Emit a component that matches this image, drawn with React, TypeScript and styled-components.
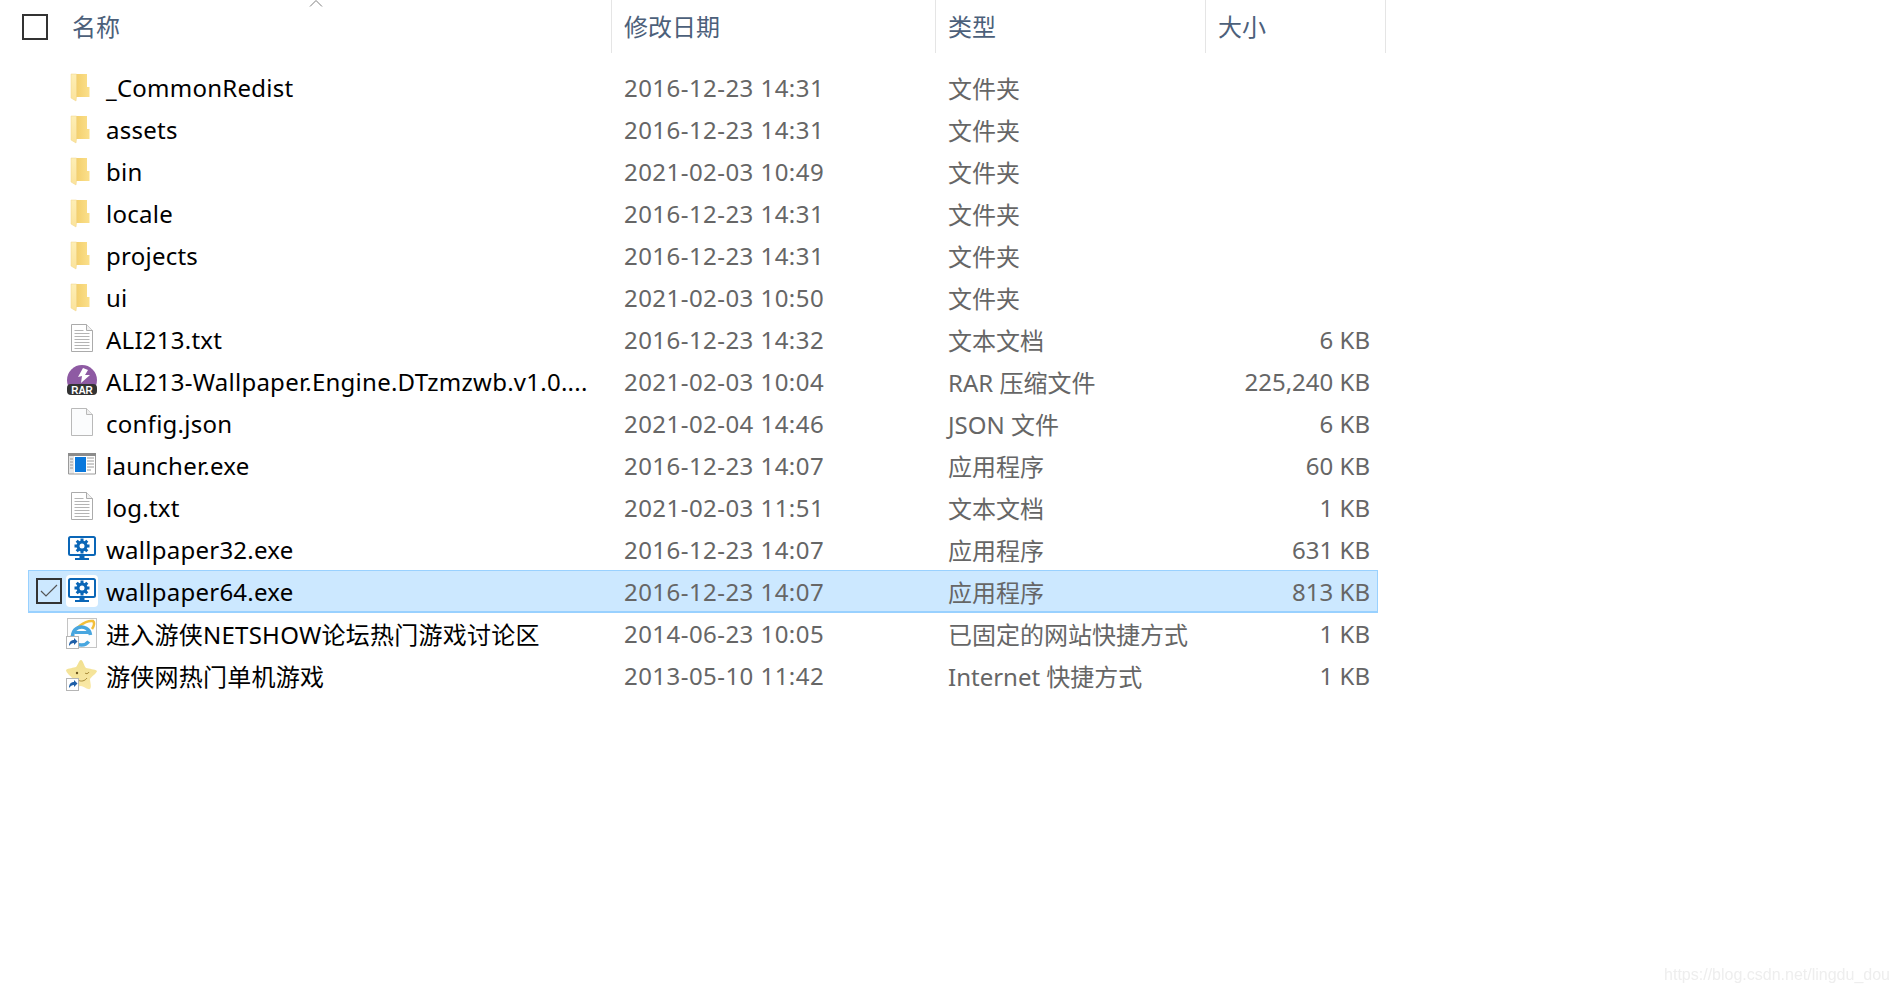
import React from "react";
import styled, { createGlobalStyle } from "styled-components";

const FONT = `"Noto Sans", "Noto Sans CJK SC", sans-serif`;

type IconKind = "folder" | "text" | "rar" | "blank" | "launcher" | "wallpaper" | "ie" | "star";

interface FileEntry {
  name: string;
  modified: string;
  type: string;
  size?: string;
  icon: IconKind;
  selected?: boolean;
}

const files: FileEntry[] = [
  { name: "_CommonRedist", modified: "2016-12-23 14:31", type: "文件夹", icon: "folder" },
  { name: "assets", modified: "2016-12-23 14:31", type: "文件夹", icon: "folder" },
  { name: "bin", modified: "2021-02-03 10:49", type: "文件夹", icon: "folder" },
  { name: "locale", modified: "2016-12-23 14:31", type: "文件夹", icon: "folder" },
  { name: "projects", modified: "2016-12-23 14:31", type: "文件夹", icon: "folder" },
  { name: "ui", modified: "2021-02-03 10:50", type: "文件夹", icon: "folder" },
  { name: "ALI213.txt", modified: "2016-12-23 14:32", type: "文本文档", size: "6 KB", icon: "text" },
  { name: "ALI213-Wallpaper.Engine.DTzmzwb.v1.0....", modified: "2021-02-03 10:04", type: "RAR 压缩文件", size: "225,240 KB", icon: "rar" },
  { name: "config.json", modified: "2021-02-04 14:46", type: "JSON 文件", size: "6 KB", icon: "blank" },
  { name: "launcher.exe", modified: "2016-12-23 14:07", type: "应用程序", size: "60 KB", icon: "launcher" },
  { name: "log.txt", modified: "2021-02-03 11:51", type: "文本文档", size: "1 KB", icon: "text" },
  { name: "wallpaper32.exe", modified: "2016-12-23 14:07", type: "应用程序", size: "631 KB", icon: "wallpaper" },
  { name: "wallpaper64.exe", modified: "2016-12-23 14:07", type: "应用程序", size: "813 KB", icon: "wallpaper", selected: true },
  { name: "进入游侠NETSHOW论坛热门游戏讨论区", modified: "2014-06-23 10:05", type: "已固定的网站快捷方式", size: "1 KB", icon: "ie" },
  { name: "游侠网热门单机游戏", modified: "2013-05-10 11:42", type: "Internet 快捷方式", size: "1 KB", icon: "star" },
];

const ShortcutBadge = () => (
  <g>
    <rect x="0.5" y="19.5" width="12" height="12" fill="#fff" stroke="#b5b5b5" />
    <path d="M3 29c0-4 2-6 5-6v-2l3.500 3.500L8 28v-2c-2 0-3.500 1-5 3z" fill="#1f5fa8" />
  </g>
);

const FileIcon: React.FC<{ kind: IconKind }> = ({ kind }) => {
  switch (kind) {
    case "folder":
      return (
        <svg width="32" height="32" viewBox="0 0 32 32">
          <defs>
            <linearGradient id="folderBack" x1="0" x2="1" y1="0" y2="0">
              <stop offset="0" stopColor="#f3cf6c" />
              <stop offset="1" stopColor="#fbe08c" />
            </linearGradient>
            <linearGradient id="folderFront" x1="0" x2="0" y1="0" y2="1">
              <stop offset="0" stopColor="#fdeeb5" />
              <stop offset="1" stopColor="#fbe39b" />
            </linearGradient>
          </defs>
          <path d="M10 3h11v13h2.500v10H10z" fill="url(#folderBack)" />
          <path d="M5 3l5.500 0V26l-0.500 4L5 27z" fill="url(#folderFront)" stroke="#f0d58a" strokeWidth="0.5" />
        </svg>
      );
    case "text":
      return (
        <svg width="32" height="32" viewBox="0 0 32 32">
          <path d="M5.500 1.500h15l6 6v21h-21z" fill="#fff" stroke="#ababab" />
          <path d="M20.500 1.500v6h6" fill="#f0f0f0" stroke="#ababab" />
          <path d="M8.500 7.500h9M8.500 10.500h15M8.500 13.500h15M8.500 16.500h15M8.500 19.500h15M8.500 22.500h15M8.500 25.500h15" stroke="#b4b4b4" />
        </svg>
      );
    case "blank":
      return (
        <svg width="32" height="32" viewBox="0 0 32 32">
          <path d="M5.500 1.500h15l6 6v21h-21z" fill="#fbfcfd" stroke="#b9b9b9" />
          <path d="M20.500 1.500v6h6" fill="#efefef" stroke="#b9b9b9" />
        </svg>
      );
    case "rar":
      return (
        <svg width="32" height="32" viewBox="0 0 32 32">
          <circle cx="16" cy="15" r="15" fill="#8e5aa3" />
          <path d="M17 3l-5 9 4-1-1 7 9-8-5 0 3-5z" fill="#fff" />
          <rect x="1" y="19" width="30" height="11" rx="4" fill="#333" />
          <RarLabel x="16" y="28.500" textAnchor="middle">RAR</RarLabel>
        </svg>
      );
    case "launcher":
      return (
        <svg width="32" height="32" viewBox="0 0 32 32">
          <rect x="2" y="4" width="28" height="21" fill="#fff" />
          <rect x="2" y="6" width="6" height="19" fill="#e6e6e6" />
          <path d="M2.500 25V4.500h27V25z" fill="none" stroke="#9a9a9a" />
          <rect x="2" y="4" width="28" height="3" fill="#8c8c8c" />
          <rect x="9" y="8" width="11" height="15" fill="#0a78dc" />
          <path d="M4 10h3M4 13h3M4 16h3M4 19h3" stroke="#9a9a9a" />
          <path d="M21 9h7M21 12h7M21 15h7M21 18h7M21 21h4" stroke="#9a9a9a" />
        </svg>
      );
    case "wallpaper":
      return (
        <svg width="32" height="32" viewBox="0 0 32 32">
          <rect x="3" y="4" width="26" height="18" rx="1.500" fill="#fff" stroke="#0a66b7" strokeWidth="2" />
          <path d="M13.500 23h5v2h-5zM9 25h14v2H9z" fill="#0a66b7" />
          <path d="M16 5.500v15M8.500 13h15M10.700 7.700l10.600 10.600M10.700 18.300L21.300 7.700" stroke="#0a66b7" strokeWidth="3" />
          <circle cx="16" cy="13" r="5.500" fill="#0a66b7" />
          <circle cx="16" cy="13" r="2.500" fill="#fff" />
        </svg>
      );
    case "ie":
      return (
        <svg width="32" height="32" viewBox="0 0 32 32">
          <rect x="1.500" y="1.500" width="29" height="29" fill="#fdfdfd" stroke="#c4c4c4" />
          <path d="M5 21C8 11 19 3 27 4c2 2 1 5-1 8" fill="none" stroke="#f4bf3a" strokeWidth="2.500" />
          <path d="M24.500 18a9 9 0 1 0-1.800 6.500" fill="none" stroke="#48a6df" strokeWidth="3.500" />
          <path d="M9 15.500h16" stroke="#48a6df" strokeWidth="3" />
          <ShortcutBadge />
        </svg>
      );
    case "star":
      return (
        <svg width="32" height="32" viewBox="0 0 32 32">
          <defs>
            <linearGradient id="starFill" x1="0" x2="0" y1="0" y2="1">
              <stop offset="0" stopColor="#f1e08f" />
              <stop offset="1" stopColor="#fae9a8" />
            </linearGradient>
          </defs>
          <path d="M15 1c2 0 3 6 5 8 3 1 9 1 11 3 0 2-6 6-7 8 0 3 2 8 0 10-2 1-7-3-9-3-3 0-7 3-9 2-2-2 0-7 0-10-1-2-6-5-6-8 2-2 8-2 10-3 2-2 3-7 5-7z" fill="url(#starFill)" />
          <circle cx="11" cy="14" r="1.200" fill="#6b5420" />
          <path d="M19 14c1 1 3 1 4-1M12 21c3 2 7 1 9-2" stroke="#a98c3a" fill="none" />
          <ShortcutBadge />
        </svg>
      );
  }
};

const App: React.FC = () => (
  <Page>
    <GlobalStyle />
    <Header>
      <SortArrow width="20" height="8" viewBox="0 0 20 8">
        <path d="M4 6.500L10 0.500l6 6" fill="none" stroke="#7f7f7f" />
      </SortArrow>
      <HeaderCheck />
      <HeaderCell $width={540}>名称</HeaderCell>
      <HeaderCell $width={324}>修改日期</HeaderCell>
      <HeaderCell $width={270}>类型</HeaderCell>
      <HeaderCell $width={180}>大小</HeaderCell>
    </Header>
    <List>
      {files.map((file) => (
        <Row key={file.name} $selected={file.selected}>
          <CheckSlot>
            {file.selected && (
              <RowCheck>
                <svg width="18" height="14" viewBox="0 0 18 14">
                  <path d="M1 7l5 5L17 1" fill="none" stroke="#555" strokeWidth="1.200" />
                </svg>
              </RowCheck>
            )}
          </CheckSlot>
          <IconSlot $selected={file.selected}>
            <FileIcon kind={file.icon} />
          </IconSlot>
          <Name>{file.name}</Name>
          <Modified>{file.modified}</Modified>
          <Meta>{file.type}</Meta>
          <Size>{file.size}</Size>
        </Row>
      ))}
    </List>
    <Watermark>https://blog.csdn.net/lingdu_dou</Watermark>
  </Page>
);

export default App;

const GlobalStyle = createGlobalStyle`
  html, body {
    margin: 0;
    background: #fff;
  }
`;

const Page = styled.div`
  position: relative;
  width: 1900px;
  height: 993px;
  overflow: hidden;
  background: #fff;
  font-family: ${FONT};
`;

const Header = styled.div`
  position: relative;
  display: flex;
  height: 53px;
  padding-left: 22px;
`;

const SortArrow = styled.svg`
  position: absolute;
  left: 306px;
  top: 0;
`;

const HeaderCheck = styled.div`
  box-sizing: border-box;
  width: 26px;
  height: 26px;
  margin: 14px 24px 0 0;
  border: 2px solid #333;
`;

const HeaderCell = styled.div<{ $width: number }>`
  box-sizing: border-box;
  width: ${(p) => p.$width}px;
  padding-left: 12px;
  border-right: 1px solid #e5e5e5;
  font-size: 24px;
  line-height: 53px;
  color: #4c607a;

  &:nth-child(3) {
    padding-left: 0;
  }
`;

const List = styled.div`
  display: flex;
  flex-direction: column;
  width: 1350px;
  margin: 13px 0 0 28px;
`;

const Row = styled.div<{ $selected?: boolean }>`
  box-sizing: border-box;
  display: grid;
  grid-template-columns: 36px 32px 526px 324px 270px 152px;
  align-items: center;
  height: 42px;
  padding-left: 1px;
  border: 1px solid ${(p) => (p.$selected ? "#99d1ff" : "transparent")};
  background: ${(p) => (p.$selected ? "#cce8ff" : "transparent")};
  box-shadow: ${(p) => (p.$selected ? "0 1px 0 #99d1ff" : "none")};
  font-size: 24px;
`;

const CheckSlot = styled.div`
  display: flex;
  align-items: center;
  padding-left: 6px;
`;

const RowCheck = styled.div`
  box-sizing: border-box;
  display: flex;
  align-items: center;
  justify-content: center;
  width: 26px;
  height: 26px;
  border: 2px solid #333;
`;

const IconSlot = styled.div<{ $selected?: boolean }>`
  display: flex;
  width: 32px;
  height: 32px;
  border-radius: 4px;
  background: ${(p) => (p.$selected ? "#fff" : "transparent")};
`;

const Name = styled.div`
  padding-left: 8px;
  color: #000;
  letter-spacing: 0.25px;
  white-space: nowrap;
`;

const Meta = styled.div`
  color: #666;
  white-space: nowrap;
`;

const Modified = styled(Meta)`
  letter-spacing: 0.45px;
`;

const Size = styled(Meta)`
  text-align: right;
`;

const RarLabel = styled.text`
  font-family: "Liberation Sans", sans-serif;
  font-size: 10px;
  font-weight: 700;
  fill: #fff;
`;

const Watermark = styled.div`
  position: absolute;
  right: 10px;
  top: 966px;
  font-family: "Liberation Sans", sans-serif;
  font-size: 16px;
  color: #eeeeee;
  filter: blur(0.4px);
`;
